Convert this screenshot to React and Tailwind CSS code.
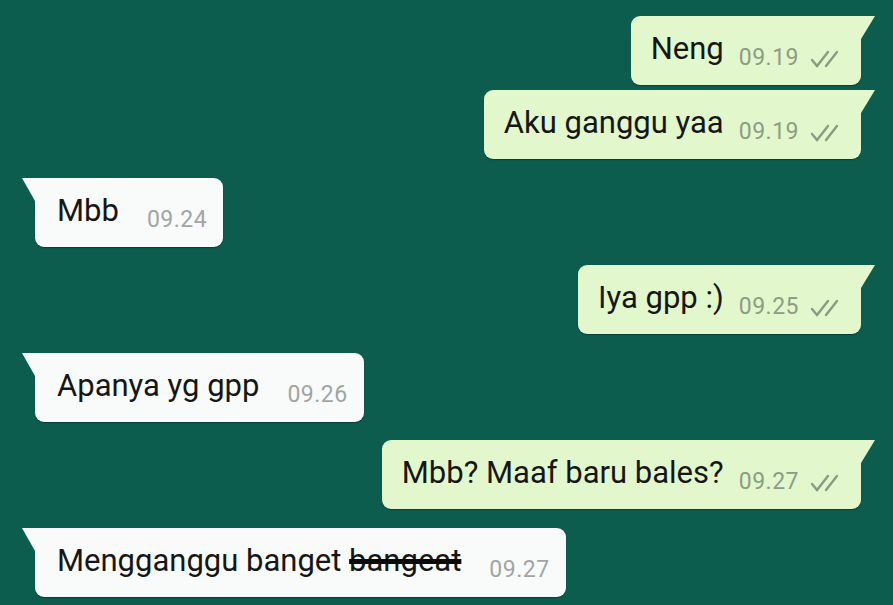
import React from "react";

const MESSAGES = [
  { out: true, text: "Neng", time: "09.19", gap: 0 },
  { out: true, text: "Aku ganggu yaa", time: "09.19", gap: 5 },
  { out: false, text: "Mbb", time: "09.24", gap: 19 },
  { out: true, text: "Iya gpp :)", time: "09.25", gap: 18 },
  { out: false, text: "Apanya yg gpp", time: "09.26", gap: 19 },
  { out: true, text: "Mbb? Maaf baru bales?", time: "09.27", gap: 18 },
  { out: false, text: "Mengganggu banget", strike: "bangeat", time: "09.27", gap: 19 }
];

function Ticks() {
  return (
    <svg width="34" height="18" viewBox="0 0 34 18" fill="none" stroke="#8a9a84" strokeWidth="2.4" strokeLinecap="round">
      <path d="M3 10 L8 16" />
      <path d="M8 16 L19 2" />
      <path d="M17 16 L28 2" />
    </svg>
  );
}

function Bubble({ msg }) {
  const bg = msg.out ? "#e2f8cc" : "#f8fbfa";
  return (
    <div className={`flex ${msg.out ? "justify-end pr-[32px]" : "justify-start pl-[35px]"}`} style={{ marginTop: msg.gap }}>
      <div
        className={`relative flex h-[69px] items-baseline pt-[17px] shadow-[0_1px_1px_rgba(0,0,0,0.35)] ${
          msg.out
            ? "gap-[15px] rounded-b-[9px] rounded-tl-[9px] bg-[#e2f8cc] pl-[20px] pr-[18px]"
            : "gap-[28px] rounded-b-[9px] rounded-tr-[9px] bg-[#f8fbfa] pl-[22px] pr-[16px]"
        }`}
      >
        {msg.out ? (
          <svg className="absolute right-[-14px] top-0" width="14" height="23" viewBox="0 0 14 23">
            <polygon points="0,0 14,0 0,23" fill={bg} />
          </svg>
        ) : (
          <svg className="absolute left-[-13px] top-0" width="13" height="23" viewBox="0 0 13 23">
            <polygon points="0,0 13,0 13,23" fill={bg} />
          </svg>
        )}
        <span className="whitespace-nowrap text-[31px] leading-[31px] text-[#161616]">
          {msg.text}
          {msg.strike ? (
            <>
              {" "}
              <span className="line-through decoration-[5px] decoration-[#0a0a0a]">{msg.strike}</span>
            </>
          ) : null}
        </span>
        <span className="flex translate-y-[6px] items-center gap-[10px]">
          <span
            className={`text-[23px] leading-[23px] tracking-[0.5px] ${msg.out ? "text-[#8d9c87]" : "text-[#a2a5a4]"}`}
          >
            {msg.time}
          </span>
          {msg.out ? (
            <span className="translate-y-[1px]">
              <Ticks />
            </span>
          ) : null}
        </span>
      </div>
    </div>
  );
}

export default function App() {
  return (
    <div className="h-[605px] w-[893px] overflow-hidden bg-[#0d5d4f] pt-[16px] font-['Roboto',sans-serif]">
      {MESSAGES.map((msg, i) => (
        <Bubble key={i} msg={msg} />
      ))}
    </div>
  );
}
